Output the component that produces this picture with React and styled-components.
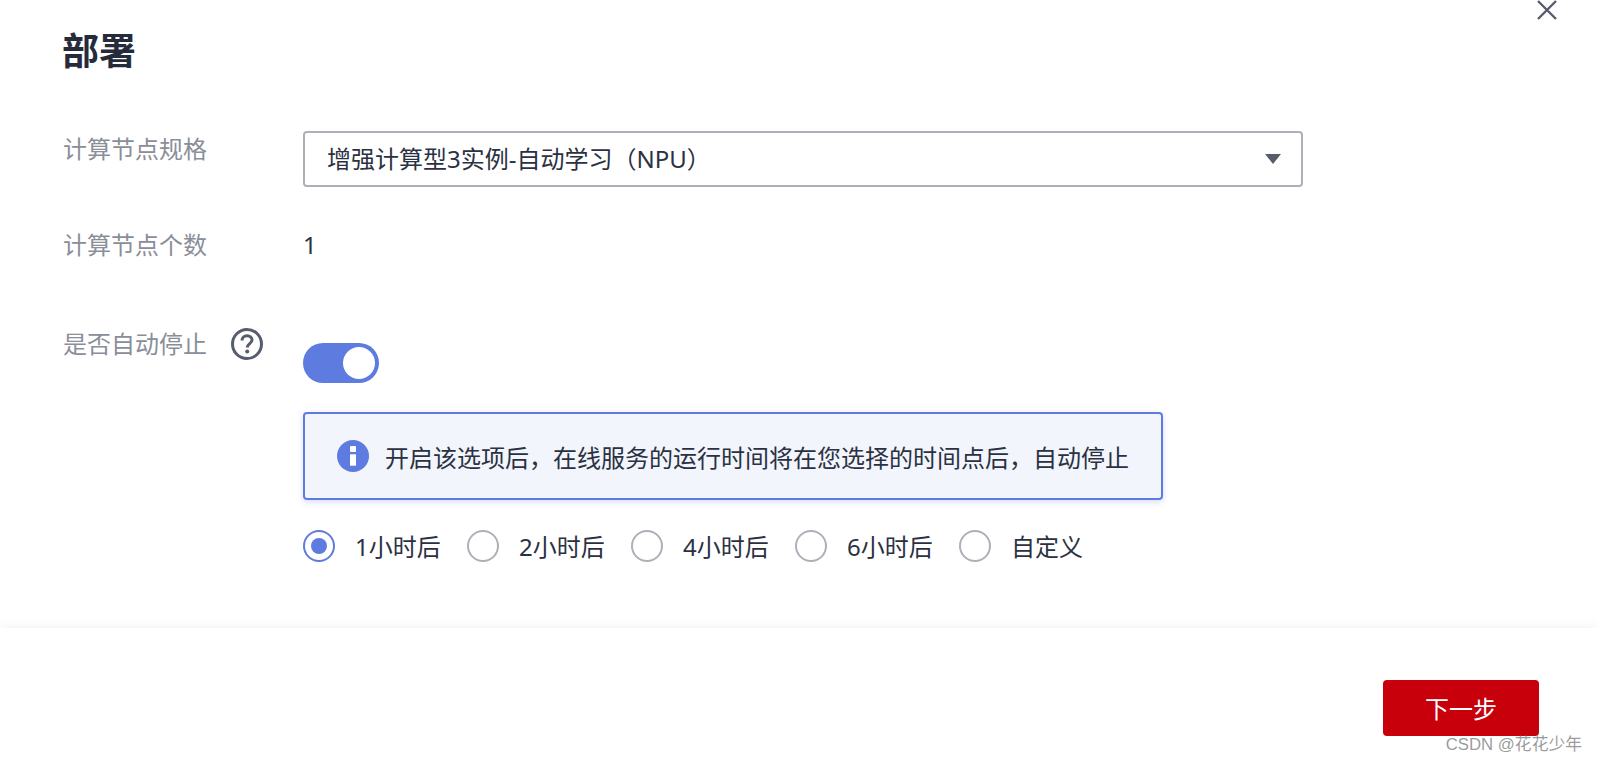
import React from "react";
import styled, { createGlobalStyle } from "styled-components";

const GlobalStyle = createGlobalStyle`
  html, body {
    margin: 0;
    padding: 0;
    background: #ffffff;
  }
  * {
    box-sizing: border-box;
  }
`;

const Page = styled.div`
  position: relative;
  display: flex;
  flex-direction: column;
  width: 100%;
  height: 100vh;
  overflow: hidden;
  font-family: "Noto Sans", "Noto Sans CJK SC", sans-serif;
  font-size: 24px;
  color: #2b3142;
`;

const CloseButton = styled.button`
  position: absolute;
  top: 0;
  right: 41px;
  width: 20px;
  height: 20px;
  padding: 0;
  border: none;
  background: transparent;
  line-height: 0;
`;

const Main = styled.div`
  flex: 1;
  padding: 33px 0 0 63px;
`;

const Title = styled.h1`
  margin: 0 0 62px -1px;
  font-size: 37px;
  line-height: 36px;
  font-weight: 700;
  color: #252b3a;
`;

const Row = styled.div`
  display: grid;
  grid-template-columns: 240px 1000px;
  margin-top: ${(props) => props.$top || 0}px;
`;

const Label = styled.div`
  display: flex;
  align-items: center;
  height: 32px;
  margin-top: ${(props) => props.$offset || 0}px;
  padding-bottom: 6px;
  color: #8a8e99;
`;

const HelpIcon = styled.svg`
  flex: none;
  width: 32px;
  height: 32px;
  margin-left: 24px;
  margin-top: 4px;
`;

const Select = styled.div`
  display: flex;
  align-items: center;
  justify-content: space-between;
  height: 56px;
  padding: 0 20px 3px 22px;
  border: 2px solid #adb0b8;
  border-radius: 4px;
`;

const Caret = styled.svg`
  width: 16px;
  height: 10px;
  margin-top: 3px;
`;

const Value = styled.div`
  margin-top: -1px;
  line-height: 32px;
`;

const AutoStop = styled.div`
  padding-top: 14px;
`;

const Toggle = styled.div`
  display: flex;
  align-items: center;
  justify-content: flex-end;
  width: 76px;
  height: 40px;
  padding-right: 4px;
  border-radius: 20px;
  background: #5e7ce0;
`;

const Knob = styled.span`
  width: 32px;
  height: 32px;
  border-radius: 50%;
  background: #ffffff;
`;

const Alert = styled.div`
  display: flex;
  align-items: center;
  gap: 16px;
  width: 860px;
  height: 88px;
  margin-top: 29px;
  padding-left: 32px;
  border: 2px solid #5e7ce0;
  border-radius: 4px;
  background: #f2f5fc;
  box-shadow: 0 2px 6px rgba(94, 124, 224, 0.25);
`;

const InfoIcon = styled.svg`
  flex: none;
  width: 32px;
  height: 32px;
`;

const RadioGroup = styled.div`
  display: flex;
  margin-top: 30px;
`;

const RadioItem = styled.label`
  display: flex;
  align-items: center;
  gap: 20px;
  width: 164px;
  height: 32px;
`;

const RadioText = styled.span`
  margin-top: -2px;
`;

const RadioCircle = styled.span`
  display: flex;
  align-items: center;
  justify-content: center;
  width: 32px;
  height: 32px;
  border-radius: 50%;
  border: 2px solid ${(props) => (props.$checked ? "#5e7ce0" : "#adb0b8")};

  &::after {
    content: "";
    display: ${(props) => (props.$checked ? "block" : "none")};
    width: 16px;
    height: 16px;
    border-radius: 50%;
    background: #5e7ce0;
  }
`;

const Footer = styled.div`
  display: flex;
  justify-content: flex-end;
  height: 135px;
  padding: 52px 59px 0 0;
  background: #ffffff;
  box-shadow: 0 -3px 8px rgba(0, 0, 0, 0.04);
`;

const NextButton = styled.button`
  width: 156px;
  height: 56px;
  padding: 0 0 2px;
  border: none;
  border-radius: 4px;
  background: #c7000b;
  color: #ffffff;
  font: inherit;
`;

const Watermark = styled.div`
  position: absolute;
  right: 16px;
  bottom: 8px;
  font-family: "Liberation Sans", "Noto Sans CJK SC", sans-serif;
  font-size: 16.8px;
  line-height: 20px;
  color: rgba(110, 110, 110, 0.7);
`;

const radios = ["1小时后", "2小时后", "4小时后", "6小时后", "自定义"];

const App = () => {
  return (
    <Page>
      <GlobalStyle />
      <CloseButton>
        <svg width="20" height="20" viewBox="0 0 20 20">
          <path d="M1 1L19 19M19 1L1 19" stroke="#575d6c" strokeWidth="2.4" fill="none" />
        </svg>
      </CloseButton>
      <Main>
        <Title>部署</Title>
        <Row>
          <Label $offset={3}>计算节点规格</Label>
          <Select>
            <span>增强计算型3实例-自动学习（NPU）</span>
            <Caret viewBox="0 0 16 10">
              <path d="M0 0H16L8 10Z" fill="#575d6c" />
            </Caret>
          </Select>
        </Row>
        <Row $top={43}>
          <Label>计算节点个数</Label>
          <Value>1</Value>
        </Row>
        <Row $top={67}>
          <Label>
            是否自动停止
            <HelpIcon viewBox="0 0 32 32">
              <circle cx="16" cy="16" r="14.5" fill="none" stroke="#575d6c" strokeWidth="3" />
              <path
                d="M11 12.5C11 9.5 13.2 7.8 16 7.8C18.9 7.8 21 9.6 21 12.1C21 15.6 16.2 15.6 16.2 19.6"
                fill="none"
                stroke="#575d6c"
                strokeWidth="3"
              />
              <circle cx="16.2" cy="23.4" r="2" fill="#575d6c" />
            </HelpIcon>
          </Label>
          <AutoStop>
            <Toggle>
              <Knob />
            </Toggle>
            <Alert>
              <InfoIcon viewBox="0 0 32 32">
                <circle cx="16" cy="16" r="16" fill="#5e7ce0" />
                <rect x="13" y="6" width="6" height="6" rx="1" fill="#ffffff" />
                <rect x="13" y="14.3" width="6" height="11.4" fill="#ffffff" />
              </InfoIcon>
              开启该选项后，在线服务的运行时间将在您选择的时间点后，自动停止
            </Alert>
            <RadioGroup>
              {radios.map((item, index) => (
                <RadioItem key={item}>
                  <RadioCircle $checked={index === 0} />
                  <RadioText>{item}</RadioText>
                </RadioItem>
              ))}
            </RadioGroup>
          </AutoStop>
        </Row>
      </Main>
      <Footer>
        <NextButton>下一步</NextButton>
      </Footer>
      <Watermark>CSDN @花花少年</Watermark>
    </Page>
  );
};

export default App;
